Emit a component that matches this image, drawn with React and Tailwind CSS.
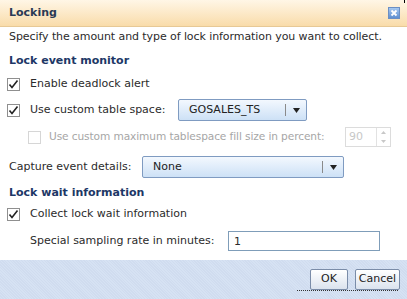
import { useState } from "react";

function Check({ checked, disabled }) {
  return (
    <span
      className={`flex h-[13px] w-[13px] shrink-0 items-center justify-center border bg-white ${
        disabled ? "border-[#d6d6d6]" : "border-[#8f8f8f]"
      }`}
    >
      {checked && (
        <svg width="11" height="11" viewBox="0 0 11 11">
          <path d="M1.5 5.5 L4 8.5 L9.5 1.5" fill="none" stroke="#222" strokeWidth="1.6" />
        </svg>
      )}
    </span>
  );
}

function Select({ value, width }) {
  return (
    <div
      className={`flex h-[22px] items-center rounded-[2px] border border-[#7f9bc1] bg-gradient-to-b from-[#f3f8fe] to-[#cde1f6] ${width}`}
    >
      <span className="flex-1 pl-[10px] text-[#222]">{value}</span>
      <span className="h-[12px] w-px bg-[#8a8a8a]" />
      <span className="flex w-[20px] justify-center">
        <svg width="7" height="5" viewBox="0 0 7 5">
          <path d="M0 0 H7 L3.5 5 Z" fill="#222" />
        </svg>
      </span>
    </div>
  );
}

export default function App() {
  const [rate, setRate] = useState("1");

  return (
    <div className="relative h-[299px] w-[407px] overflow-hidden bg-white font-['DejaVu_Sans',sans-serif] text-[11px] text-[#2b2b2b]">
      <div className="absolute right-[2px] top-0 h-[3px] w-px bg-black" />
      <div className="flex h-[27px] items-center justify-between border-b border-[#e7c996] bg-gradient-to-b from-[#fff6e6] to-[#f9dcaa] pl-[9px] pr-[7px]">
        <span className="font-bold text-[#2a3a55]">Locking</span>
        <span className="flex h-[12px] w-[12px] items-center justify-center border border-[#6b8fc4] bg-gradient-to-b from-[#a6c8f0] to-[#5f8fd1]">
          <svg width="8" height="8" viewBox="0 0 8 8">
            <path d="M1.5 1.5 L6.5 6.5 M6.5 1.5 L1.5 6.5" stroke="white" strokeWidth="1.8" />
          </svg>
        </span>
      </div>

      <div className="px-[9px]">
        <p className="mt-[3px] leading-[14px] tracking-[-0.08px]">
          Specify the amount and type of lock information you want to collect.
        </p>

        <h2 className="mt-[10px] font-bold leading-[14px] text-[#1d3766]">Lock event monitor</h2>

        <div className="-ml-[2px] mt-[9px] flex h-[14px] items-center gap-[10px]">
          <Check checked />
          <span>Enable deadlock alert</span>
        </div>

        <div className="-ml-[2px] mt-[8px] flex items-center">
          <Check checked />
          <span className="ml-[10px] w-[148px]">Use custom table space:</span>
          <Select value="GOSALES_TS" width="w-[129px]" />
        </div>

        <div className="mt-[6px] flex items-center whitespace-nowrap pl-[19px] text-[#a6a6a6]">
          <Check disabled />
          <span className="ml-[8px] w-[288px] text-[10.6px] tracking-[-0.1px]">
            Use custom maximum tablespace fill size in percent:
          </span>
          <div className="ml-[8px] flex h-[20px] w-[46px] border border-[#dcdcdc]">
            <span className="flex-1 pl-[3px] leading-[18px] text-[#c8c8c8]">90</span>
            <span className="flex w-[14px] flex-col items-center justify-around border-l border-[#e2e2e2]">
              <svg width="5" height="3" viewBox="0 0 5 3"><path d="M0 3 L2.5 0 L5 3 Z" fill="#c8c8c8" /></svg>
              <svg width="5" height="3" viewBox="0 0 5 3"><path d="M0 0 L2.5 3 L5 0 Z" fill="#c8c8c8" /></svg>
            </span>
          </div>
        </div>

        <div className="mt-[9px] flex items-center">
          <span className="w-[133px]">Capture event details:</span>
          <Select value="None" width="w-[202px]" />
        </div>

        <h2 className="mt-[8px] font-bold leading-[14px] text-[#1d3766]">Lock wait information</h2>

        <div className="-ml-[2px] mt-[7px] flex h-[14px] items-center gap-[10px]">
          <Check checked />
          <span>Collect lock wait information</span>
        </div>

        <div className="mt-[10px] flex items-center pl-[21px]">
          <span className="w-[198px]">Special sampling rate in minutes:</span>
          <input
            value={rate}
            onChange={(e) => setRate(e.target.value)}
            className="h-[20px] w-[152px] border border-[#7f9db9] px-[5px] text-[11px] outline-none"
          />
        </div>
      </div>

      <div className="absolute bottom-0 left-0 right-0 flex h-[39px] items-center justify-end gap-[7px] bg-[#d3dff1] bg-[repeating-linear-gradient(45deg,#d0dcef_0px,#d0dcef_1px,#d6e2f3_1px,#d6e2f3_2px)] pr-[7px]">
        <button className="h-[21px] w-[38px] rounded-[2px] border border-[#7a8ca8] bg-gradient-to-b from-white to-[#dbe3ee] text-[11px] text-[#222]">
          OK
        </button>
        <button className="h-[21px] w-[45px] rounded-[2px] border border-[#7a8ca8] bg-gradient-to-b from-white to-[#dbe3ee] text-[11px] text-[#222]">
          Cancel
        </button>
        <div className="absolute bottom-[8px] right-[9px] w-[101px] border-b border-dotted border-[#333]" />
      </div>
    </div>
  );
}
